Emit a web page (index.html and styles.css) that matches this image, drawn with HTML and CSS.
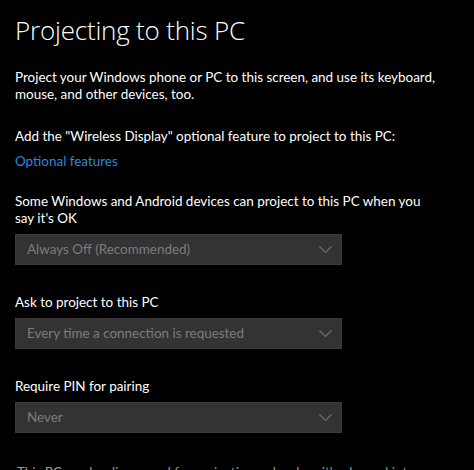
FILE: index.html
```html
<!DOCTYPE html>
<html lang="en">
<head>
  <meta charset="UTF-8">
  <title>Projecting to this PC</title>
  <link rel="stylesheet" href="styles.css">
</head>
<body>
  <div class="page">
    <h1 class="title">Projecting to this PC</h1>
    <p class="intro">Project your Windows phone or PC to this screen, and use its keyboard, mouse, and other devices, too.</p>

    <p class="feature-note">Add the "Wireless Display" optional feature to project to this PC:</p>
    <a class="link" href="#">Optional features</a>

    <div class="setting">
      <label class="setting-label">Some Windows and Android devices can project to this PC when you say it's OK</label>
      <div class="combo">
        <span>Always Off (Recommended)</span>
        <svg class="chevron" width="13" height="8" viewBox="0 0 13 8"><polyline points="0.5,0.5 6.5,6.5 12.5,0.5" fill="none" stroke="currentColor" stroke-width="1.2"/></svg>
      </div>
    </div>

    <div class="setting">
      <label class="setting-label">Ask to project to this PC</label>
      <div class="combo">
        <span>Every time a connection is requested</span>
        <svg class="chevron" width="13" height="8" viewBox="0 0 13 8"><polyline points="0.5,0.5 6.5,6.5 12.5,0.5" fill="none" stroke="currentColor" stroke-width="1.2"/></svg>
      </div>
    </div>

    <div class="setting">
      <label class="setting-label">Require PIN for pairing</label>
      <div class="combo">
        <span>Never</span>
        <svg class="chevron" width="13" height="8" viewBox="0 0 13 8"><polyline points="0.5,0.5 6.5,6.5 12.5,0.5" fill="none" stroke="currentColor" stroke-width="1.2"/></svg>
      </div>
    </div>

    <p class="footnote">This PC can be discovered for projection only when it's plugged into a power source.</p>
  </div>
</body>
</html>
```

FILE: styles.css
```css
/* Global Reset */
* { box-sizing: border-box; }
html, body { margin: 0; padding: 0; overflow: hidden; }

body {
  background: #000;
  color: #fff;
  font-family: Lato, "Open Sans", sans-serif;
  font-size: 13.45px;
  line-height: 17px;
}

.page { padding: 12px 15px 0; width: 474px; }

/* Heading */
.title {
  margin: 0;
  font-family: "Open Sans", sans-serif;
  font-size: 26px;
  font-weight: 300;
  line-height: 36px;
  letter-spacing: -0.2px;
}

/* Text blocks */
.intro { margin: 21px 0 0; width: 440px; }
.feature-note { margin: 25px 0 0; }
.link {
  display: block;
  margin-top: 8px;
  color: #2f86d6;
  text-decoration: none;
}

/* Settings */
.setting { margin-top: 23px; }
.setting + .setting { margin-top: 29px; }
.setting-label { display: block; width: 420px; }

.combo {
  display: flex;
  align-items: center;
  justify-content: space-between;
  width: 327px;
  height: 31px;
  margin-top: 7px;
  padding: 0 9px 0 11px;
  background: #333;
  border: 1px solid #3b3b3b;
  color: #7c7c7c;
}
.chevron { color: #6f6f6f; }

.footnote {
  margin: 31px 0 0 2px;
  width: 420px;
  color: #9a9a9a;
}
```
